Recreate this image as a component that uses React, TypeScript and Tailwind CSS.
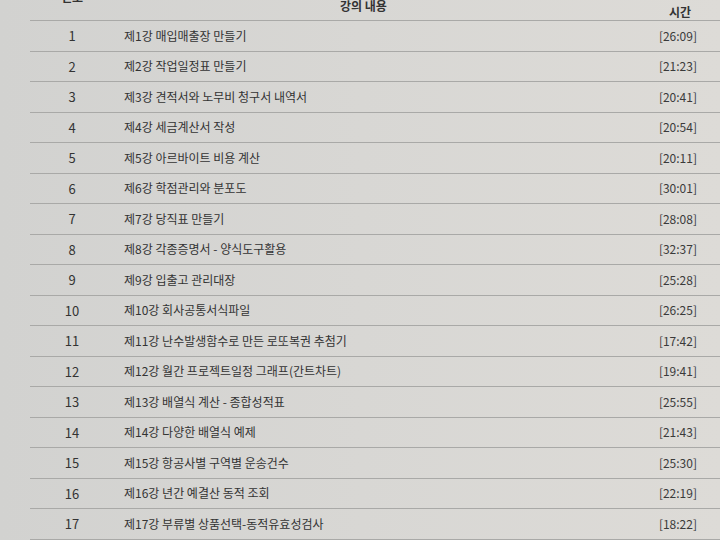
const lectures = [
  { no: 1, title: "제1강 매입매출장 만들기", time: "[26:09]" },
  { no: 2, title: "제2강 작업일정표 만들기", time: "[21:23]" },
  { no: 3, title: "제3강 견적서와 노무비 청구서 내역서", time: "[20:41]" },
  { no: 4, title: "제4강 세금계산서 작성", time: "[20:54]" },
  { no: 5, title: "제5강 아르바이트 비용 계산", time: "[20:11]" },
  { no: 6, title: "제6강 학점관리와 분포도", time: "[30:01]" },
  { no: 7, title: "제7강 당직표 만들기", time: "[28:08]" },
  { no: 8, title: "제8강 각종증명서 - 양식도구활용", time: "[32:37]" },
  { no: 9, title: "제9강 입출고 관리대장", time: "[25:28]" },
  { no: 10, title: "제10강 회사공통서식파일", time: "[26:25]" },
  { no: 11, title: "제11강 난수발생함수로 만든 로또복권 추첨기", time: "[17:42]" },
  { no: 12, title: "제12강 월간 프로젝트일정 그래프(간트차트)", time: "[19:41]" },
  { no: 13, title: "제13강 배열식 계산 - 종합성적표", time: "[25:55]" },
  { no: 14, title: "제14강 다양한 배열식 예제", time: "[21:43]" },
  { no: 15, title: "제15강 항공사별 구역별 운송건수", time: "[25:30]" },
  { no: 16, title: "제16강 년간 예결산 동적 조회", time: "[22:19]" },
  { no: 17, title: "제17강 부류별 상품선택-동적유효성검사", time: "[18:22]" },
];

export default function App() {
  return (
    <div className="h-[540px] w-[720px] overflow-hidden bg-linear-to-r from-[#d2d2d0] via-[#d8d7d4] to-[#dddbd7] font-['Noto_Sans_CJK_KR','Noto_Sans',sans-serif] text-[#2f2f2f]">
      <div className="ml-[30px]">
        {/* header row, partly cut off by the top edge as in the photo */}
        <div className="flex h-[21px] border-b border-[#a9a9a7] text-[12px] font-bold text-[#333]">
          <div className="w-[84px] -mt-[9px] text-center leading-[12px]">번호</div>
          <div className="flex-1 pl-[226px] leading-[12px]">강의 내용</div>
          <div className="self-end pb-[2px] pr-[29px] leading-[12px]">시간</div>
        </div>

        {lectures.map((row) => (
          <div
            key={row.no}
            className="flex h-[30.5px] items-center border-b border-[#a9a9a7]"
          >
            <div className="w-[84px] text-center text-[13px] leading-none text-[#333]">
              {row.no}
            </div>
            <div className="flex-1 pl-[10px] text-[12px] leading-none text-[#333]">
              {row.title}
            </div>
            <div className="pr-[23px] text-[12px] leading-none text-[#3a3a3a]">
              {row.time}
            </div>
          </div>
        ))}
      </div>
    </div>
  );
}
